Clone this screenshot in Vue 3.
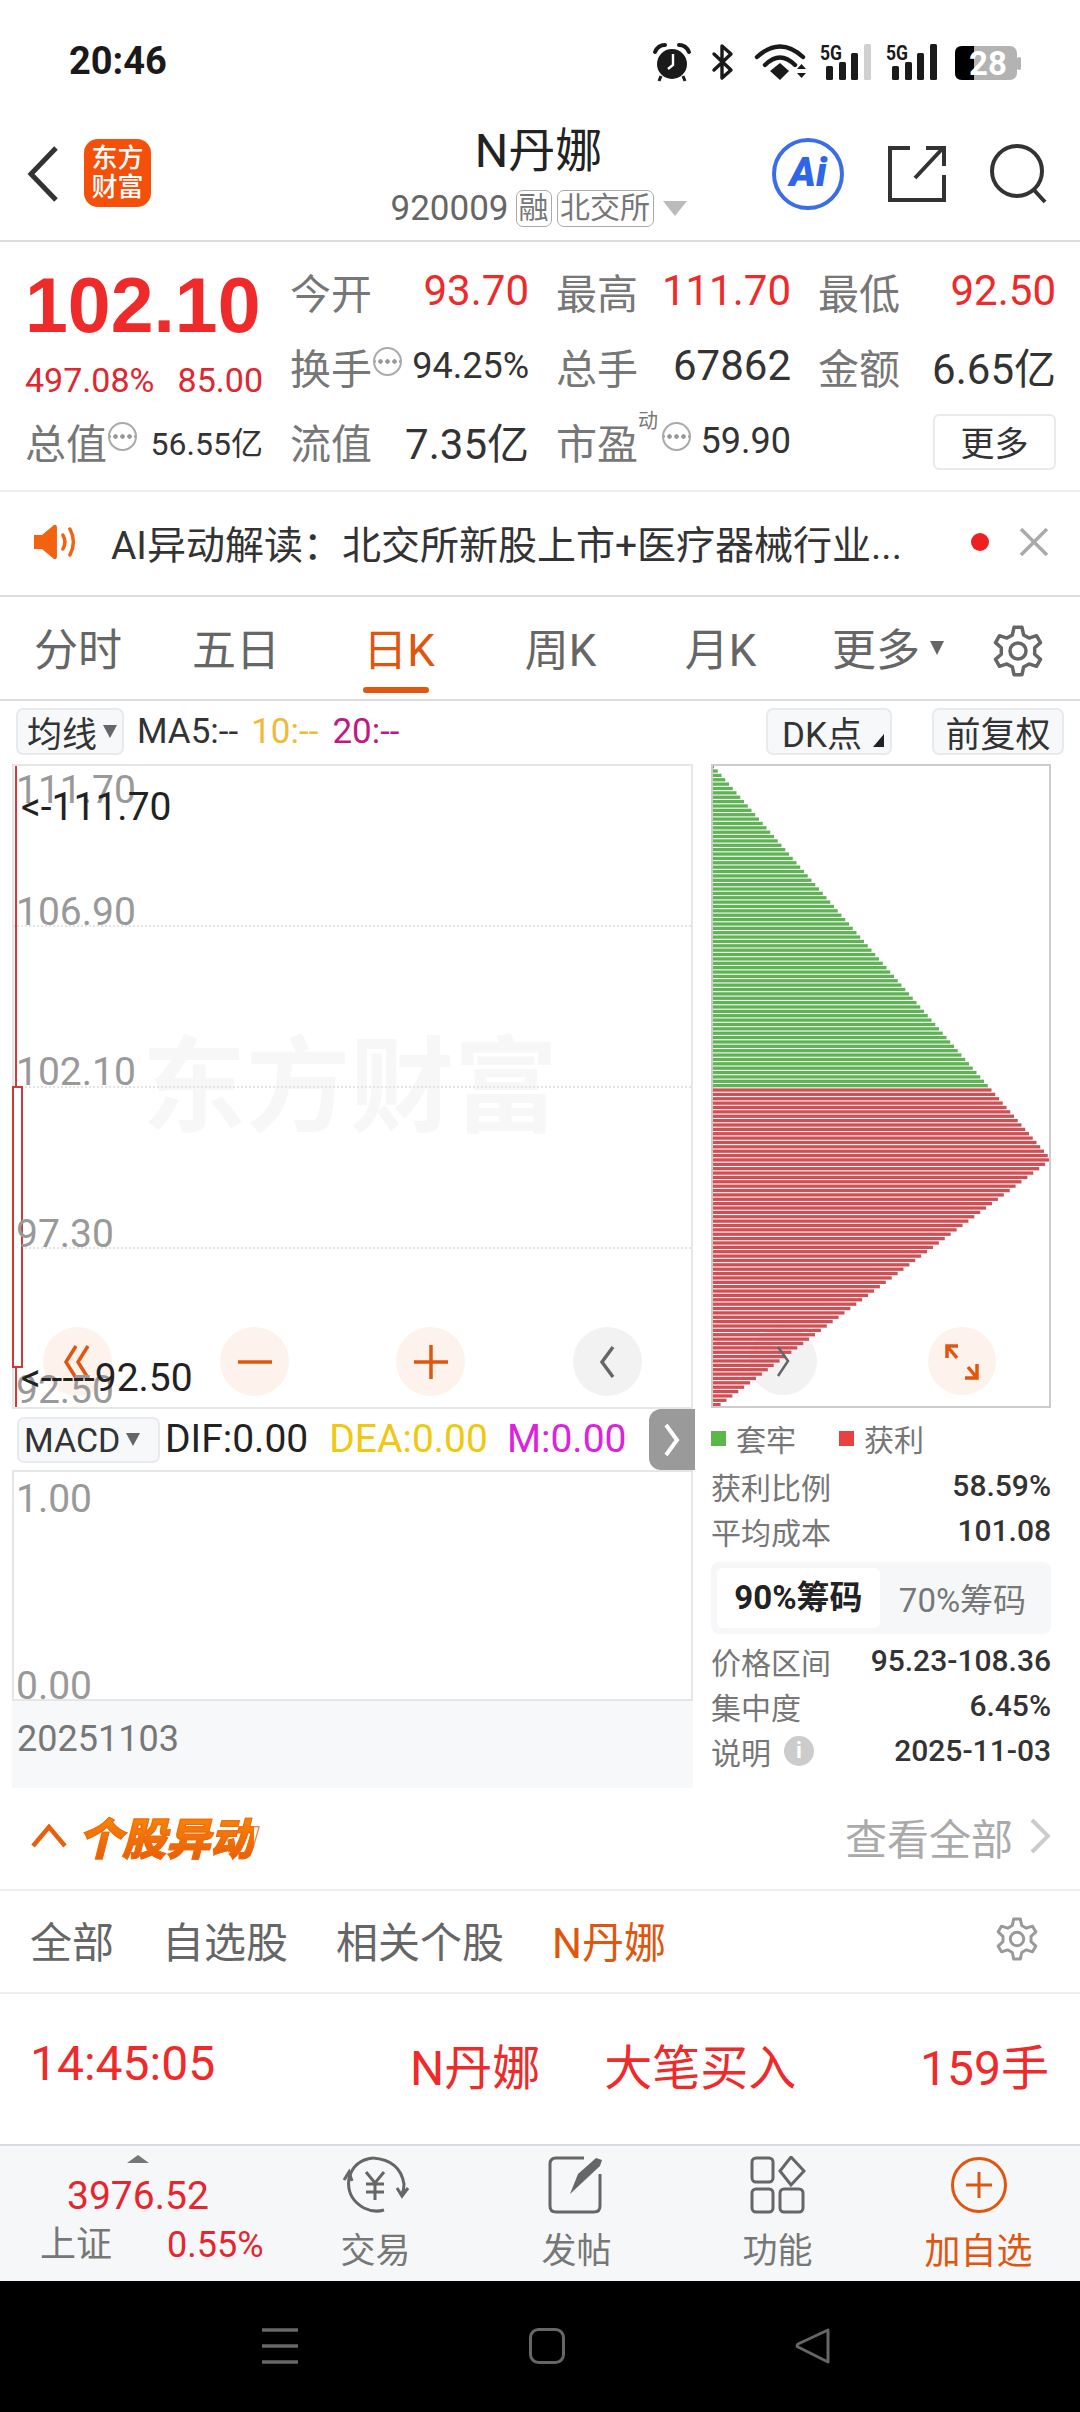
<template>
  <div class="page">
    <!-- status bar -->
    <div class="status">
      <span class="time">20:46</span>
      <div class="status-icons">
        <svg width="38" height="38" viewBox="0 0 38 38">
          <circle cx="19" cy="21" r="15" fill="#1a1a1a" />
          <path d="M2 9 Q5 2 12 2 M36 9 Q33 2 26 2" fill="none" stroke="#1a1a1a" stroke-width="4" stroke-linecap="round" />
          <path d="M8 33 L6 38 M30 33 L32 38" stroke="#1a1a1a" stroke-width="3" />
          <path d="M20 11 V22 L15 26" fill="none" stroke="#fff" stroke-width="2.4" />
        </svg>
        <svg class="bt" width="22" height="36" viewBox="0 0 22 36">
          <path d="M2 10 L19 26 L10 34 V2 L19 10 L2 26" fill="none" stroke="#1a1a1a" stroke-width="3.4" stroke-linejoin="round" stroke-linecap="round" />
        </svg>
        <svg class="wifi" width="50" height="36" viewBox="0 0 50 36">
          <path d="M1 13 Q24 -8 47 13" fill="none" stroke="#1a1a1a" stroke-width="4.4" stroke-linecap="round" />
          <path d="M9 21 Q24 6 39 21" fill="none" stroke="#1a1a1a" stroke-width="4.4" stroke-linecap="round" />
          <path d="M14 27 L24 19 L33 27 L24 36 Z" fill="#1a1a1a" />
          <path d="M41 25 L45.500 20 L50 25 Z M41 29 L50 29 L45.500 34 Z" fill="#1a1a1a" />
        </svg>
        <svg v-for="s in signals" :key="s.id" class="sig" width="52" height="36" viewBox="0 0 52 36">
          <text x="0" y="16" font-size="21" font-weight="700" textLength="22" lengthAdjust="spacingAndGlyphs" fill="#1a1a1a" font-family="Roboto, sans-serif">5G</text>
          <rect x="6" y="22" width="7" height="14" rx="1.500" fill="#1a1a1a" />
          <rect x="19" y="18" width="7" height="18" rx="1.500" fill="#1a1a1a" />
          <rect x="31" y="9" width="7" height="27" rx="1.500" fill="#1a1a1a" />
          <rect x="44" y="0" width="7" height="36" rx="1.500" :fill="s.last" />
        </svg>
        <svg class="batt" width="66" height="34" viewBox="0 0 66 34">
          <rect x="0" y="0" width="62" height="34" rx="7" fill="#b3b3b3" />
          <path d="M7 0 H19 V34 H7 Q0 34 0 27 V7 Q0 0 7 0 Z" fill="#000" />
          <rect x="62" y="11" width="4" height="13" rx="2" fill="#b3b3b3" />
          <text x="33" y="29" text-anchor="middle" font-size="33" font-weight="700" fill="#fff" font-family="Roboto, sans-serif">28</text>
        </svg>
      </div>
    </div>

    <!-- nav -->
    <div class="nav">
      <div class="nav-left">
        <svg width="32" height="56" viewBox="0 0 32 56">
          <path d="M29 2 L4 28 L29 54" fill="none" stroke="#333" stroke-width="5" />
        </svg>
        <div class="logo"><span>东方</span><span>财富</span></div>
      </div>
      <div class="nav-mid">
        <div class="title">N丹娜</div>
        <div class="sub">
          <span class="code">920009</span>
          <span class="tag t1">融</span>
          <span class="tag t2">北交所</span>
          <i class="sub-tri"></i>
        </div>
      </div>
      <div class="nav-right">
        <div class="ai-btn">Ai</div>
        <svg width="58" height="58" viewBox="0 0 58 58">
          <path d="M22 3 H2 V55 H56 V30" fill="none" stroke="#333" stroke-width="4" />
          <path d="M27 33 L55 3 M38 3 H56 V21" fill="none" stroke="#333" stroke-width="4" />
        </svg>
        <svg width="60" height="60" viewBox="0 0 60 60">
          <circle cx="27" cy="27" r="25" fill="none" stroke="#333" stroke-width="4" />
          <path d="M44 46 L55 58" stroke="#333" stroke-width="4" />
        </svg>
      </div>
    </div>

    <!-- quote -->
    <div class="quote">
      <div class="now">
        <div class="price">102.10</div>
        <div class="change"><span>497.08%</span><span>85.00</span></div>
      </div>
      <div class="cell"><span class="lab">今开</span><span class="val red">93.70</span></div>
      <div class="cell"><span class="lab">最高</span><span class="val red">111.70</span></div>
      <div class="cell"><span class="lab">最低</span><span class="val red">92.50</span></div>
      <div class="cell">
        <span class="lab">换手<i class="dots"></i></span><span class="val small">94.25%</span>
      </div>
      <div class="cell"><span class="lab">总手</span><span class="val">67862</span></div>
      <div class="cell"><span class="lab">金额</span><span class="val">6.65亿</span></div>
      <div class="cell">
        <span class="lab">总值<i class="dots"></i></span><span class="val tiny">56.55亿</span>
      </div>
      <div class="cell"><span class="lab">流值</span><span class="val">7.35亿</span></div>
      <div class="cell">
        <span class="lab">市盈<sup class="dong">动</sup><i class="dots"></i></span><span class="val small">59.90</span>
      </div>
      <div class="cell end"><button class="more">更多</button></div>
    </div>

    <!-- notice -->
    <div class="notice">
      <svg width="44" height="36" viewBox="0 0 44 36">
        <path d="M0 11 H8 L20 1 Q23 0 23 4 V32 Q23 36 20 35 L8 25 H0 Z" fill="#f4620f" />
        <path d="M29 11 Q33 18 29 25 M36 5 Q43 18 36 31" fill="none" stroke="#f4620f" stroke-width="3.500" stroke-linecap="round" />
      </svg>
      <span class="notice-text">AI异动解读：北交所新股上市+医疗器械行业...</span>
      <i class="notice-dot"></i>
      <svg width="30" height="28" viewBox="0 0 30 28">
        <path d="M2 1 L28 27 M28 1 L2 27" stroke="#aaa" stroke-width="3.500" />
      </svg>
    </div>

    <!-- period tabs -->
    <div class="periods">
      <div class="period-list">
        <span v-for="p in periods" :key="p" class="period" :class="{ on: p === '日K' }">{{ p }}</span>
        <span class="period">更多<i class="more-tri"></i></span>
      </div>
      <svg width="50" height="52" viewBox="0 0 50 52">
        <path :d="gearPath(25, 26, 24, 17, 6)" fill="none" stroke="#666" stroke-width="3.500" stroke-linejoin="round" />
        <circle cx="25" cy="26" r="8" fill="none" stroke="#666" stroke-width="3.500" />
      </svg>
    </div>

    <!-- toolbar -->
    <div class="toolbar">
      <div class="tool-btn ma">均线<i class="down-tri"></i></div>
      <span class="ma5">MA5:--</span>
      <span class="ma10">10:--</span>
      <span class="ma20">20:--</span>
      <div class="tool-btn dk">DK点<i class="corner"></i></div>
      <div class="tool-btn fq">前复权</div>
    </div>

    <!-- charts -->
    <div class="charts">
      <div class="left-col">
        <div class="kline">
          <div class="watermark">东方财富</div>
          <i v-for="g in gridTops" :key="g" class="grid" :style="{ top: g + 'px' }"></i>
          <i class="wick"></i>
          <i class="candle"></i>
          <div v-for="b in roundBtns" :key="b.id" class="round" :class="b.cls" :style="{ left: b.x + 'px' }">
            <svg width="36" height="36" viewBox="0 0 36 36">
              <path :d="b.d" fill="none" :stroke="b.color" stroke-width="3.500" />
            </svg>
          </div>
          <span v-for="a in axis" :key="a.t" class="axis" :style="{ top: a.y + 'px' }">{{ a.t }}</span>
          <span class="mark m1">&lt;-111.70</span>
          <span class="mark m2">&lt;-----92.50</span>
        </div>
        <div class="macd-bar">
          <div class="tool-btn macd">MACD<i class="down-tri"></i></div>
          <span class="dif">DIF:0.00</span>
          <span class="dea">DEA:0.00</span>
          <span class="m">M:0.00</span>
          <div class="macd-arrow">
            <svg width="20" height="36" viewBox="0 0 20 36">
              <path d="M4 3 L15 18 L4 33" fill="none" stroke="#fff" stroke-width="4" />
            </svg>
          </div>
        </div>
        <div class="macd-chart">
          <span>1.00</span>
          <span class="zero">0.00</span>
        </div>
        <div class="date">20251103</div>
      </div>

      <div class="right-col">
        <svg class="chips" width="340" height="644" viewBox="0 0 340 644">
          <circle cx="72" cy="597" r="34" fill="#f2f2f2" />
          <circle cx="251" cy="597" r="34" fill="#fdf2ec" />
          <rect v-for="b in chipBars" :key="b.y" x="0" :y="b.y" :width="b.w" height="3.3" :fill="b.c" />
          <path d="M67 583 L77 597 L67 612" fill="none" stroke="#666" stroke-width="2.500" />
          <path d="M236 594 V582 H247 M236 582 L246 594 M266 600 V614 H254 M266 614 L257 603" fill="none" stroke="#e0560f" stroke-width="3.500" />
          <rect x="1" y="1" width="338" height="642" fill="none" stroke="#ccc" stroke-width="2" />
        </svg>
        <div class="legend">
          <i class="sq green"></i><span>套牢</span>
          <i class="sq redsq"></i><span>获利</span>
        </div>
        <div class="stat"><span>获利比例</span><b>58.59%</b></div>
        <div class="stat"><span>平均成本</span><b>101.08</b></div>
        <div class="seg">
          <span class="seg-on">90%筹码</span>
          <span class="seg-off">70%筹码</span>
        </div>
        <div class="stat"><span>价格区间</span><b>95.23-108.36</b></div>
        <div class="stat"><span>集中度</span><b>6.45%</b></div>
        <div class="stat"><span>说明<i class="info">i</i></span><b>2025-11-03</b></div>
      </div>
    </div>

    <!-- stock moves -->
    <div class="moves-head">
      <svg width="36" height="24" viewBox="0 0 36 24">
        <path d="M2 22 L18 3 L34 22" fill="none" stroke="#e8600e" stroke-width="4.500" />
      </svg>
      <span class="moves-title">个股异动</span>
      <span class="see-all">查看全部</span>
      <svg width="20" height="36" viewBox="0 0 20 36">
        <path d="M2 2 L18 18 L2 34" fill="none" stroke="#ccc" stroke-width="4" />
      </svg>
    </div>
    <div class="filters">
      <span>全部</span>
      <span>自选股</span>
      <span>相关个股</span>
      <span class="on">N丹娜</span>
      <svg class="filter-gear" width="42" height="44" viewBox="0 0 50 52">
        <path :d="gearPath(25, 26, 24, 17, 6)" fill="none" stroke="#999" stroke-width="3.500" stroke-linejoin="round" />
        <circle cx="25" cy="26" r="8" fill="none" stroke="#999" stroke-width="3.500" />
      </svg>
    </div>
    <div class="move-row">
      <span class="mv-time">14:45:05</span>
      <span class="mv-name">N丹娜</span>
      <span class="mv-type">大笔买入</span>
      <span class="mv-vol">159手</span>
    </div>

    <!-- bottom bar -->
    <div class="bottom">
      <div class="index">
        <i class="idx-tri"></i>
        <div class="idx-price">3976.52</div>
        <div class="idx-row"><span class="idx-name">上证</span><span class="idx-pct">0.55%</span></div>
      </div>
      <div class="bot-item">
        <svg width="68" height="58" viewBox="0 0 68 58">
          <path d="M31 2 Q12 4 7 22 Q4 42 22 52 Q32 57 42 54" fill="none" stroke="#666" stroke-width="3" />
          <path d="M31 2 Q58 4 62 28 Q62 34 60 38" fill="none" stroke="#666" stroke-width="3" />
          <path d="M2 24 L7 16 L10 25 M55 32 L60 40 L66 32" fill="none" stroke="#666" stroke-width="3" />
          <path d="M24 16 L33 27 L42 16 M33 27 V44 M24 28 H42 M24 36 H42" fill="none" stroke="#666" stroke-width="3" />
        </svg>
        <span>交易</span>
      </div>
      <div class="bot-item">
        <svg width="58" height="58" viewBox="0 0 58 58">
          <path d="M36 2 H8 Q2 2 2 8 V50 Q2 56 8 56 H46 Q52 56 52 50 V18" fill="none" stroke="#666" stroke-width="3" />
          <path d="M22 38 L30 18 L48 2 L54 4 L52 10 Z" fill="#666" />
        </svg>
        <span>发帖</span>
      </div>
      <div class="bot-item">
        <svg width="56" height="58" viewBox="0 0 56 58">
          <rect x="2" y="2" width="21" height="24" rx="4" fill="none" stroke="#666" stroke-width="3" />
          <path d="M41 1 L54 15 L41 29 L30 15 Z" fill="none" stroke="#666" stroke-width="3" />
          <rect x="2" y="33" width="21" height="23" rx="4" fill="none" stroke="#666" stroke-width="3" />
          <rect x="30" y="33" width="23" height="23" rx="4" fill="none" stroke="#666" stroke-width="3" />
        </svg>
        <span>功能</span>
      </div>
      <div class="bot-item add">
        <svg width="58" height="58" viewBox="0 0 58 58">
          <circle cx="29" cy="29" r="26.500" fill="none" stroke="#e0560f" stroke-width="3" />
          <path d="M29 16 V42 M16 29 H42" stroke="#e0560f" stroke-width="3" />
        </svg>
        <span>加自选</span>
      </div>
    </div>

    <!-- system nav -->
    <div class="sysnav">
      <svg width="36" height="36" viewBox="0 0 36 36">
        <path d="M0 2 H36 M0 18 H36 M0 34 H36" stroke="#666" stroke-width="3.500" />
      </svg>
      <svg width="36" height="36" viewBox="0 0 36 36">
        <rect x="1.500" y="1.500" width="33" height="33" rx="8" fill="none" stroke="#666" stroke-width="3" />
      </svg>
      <svg width="36" height="36" viewBox="0 0 36 36">
        <path d="M33 2 V34 L3 19 Q1 18 3 16 Z" fill="none" stroke="#666" stroke-width="3" stroke-linejoin="round" />
      </svg>
    </div>
  </div>
</template>

<script setup>
const signals = [
  { id: 1, last: '#d0d0d0' },
  { id: 2, last: '#1a1a1a' }
]

const periods = ['分时', '五日', '日K', '周K', '月K']

const gridTops = [159, 320, 481]

const axis = [
  { t: '111.70', y: 5 },
  { t: '106.90', y: 127 },
  { t: '102.10', y: 287 },
  { t: '97.30', y: 449 },
  { t: '92.50', y: 605 }
]

const roundBtns = [
  { id: 1, x: 29, cls: 'warm', color: '#e0560f', d: 'M16 2 L6 18 L16 34 M28 2 L18 18 L28 34' },
  { id: 2, x: 206, cls: 'warm', color: '#e0560f', d: 'M1 18 H35' },
  { id: 3, x: 382, cls: 'warm', color: '#e0560f', d: 'M1 18 H35 M18 1 V35' },
  { id: 4, x: 559, cls: 'grey', color: '#666', d: 'M23 3 L12 18 L23 33' }
]

// chip distribution: 90 bars grow to the peak, then 57 shrink
const chipBars = []
for (let i = 0; i < 147; i++) {
  const w = i <= 90 ? 3 + i * 3.75 : 340 - (i - 90) * 5.9
  chipBars.push({
    y: +(1 + i * 4.37).toFixed(2),
    w: Math.max(w, 3),
    c: i < 74 ? '#5fb355' : '#cf4f54'
  })
}

function gearPath(cx, cy, r1, r2, teeth) {
  const pts = []
  const step = (Math.PI * 2) / teeth
  for (let i = 0; i < teeth; i++) {
    const a = i * step - Math.PI / 2
    const list = [
      [a - step * 0.16, r1],
      [a + step * 0.16, r1],
      [a + step * 0.32, r2],
      [a + step * 0.68, r2]
    ]
    for (const [ang, r] of list) {
      pts.push((cx + Math.cos(ang) * r).toFixed(1) + ' ' + (cy + Math.sin(ang) * r).toFixed(1))
    }
  }
  return 'M' + pts.join(' L') + ' Z'
}
</script>

<style>
html,
body {
  margin: 0;
  background: #fff;
}
</style>

<style scoped>
.page {
  width: 1080px;
  height: 2412px;
  overflow: hidden;
  background: #fff;
  font-family: Roboto, "Noto Sans CJK SC", sans-serif;
  color: #333;
}
.page * {
  box-sizing: border-box;
}
i {
  display: block;
}

.status {
  height: 122px;
  padding: 0 59px 0 69px;
  display: flex;
  justify-content: space-between;
  align-items: flex-start;
}
.time {
  margin-top: 39px;
  font-size: 38px;
  line-height: 44px;
  font-weight: 700;
  color: #1a1a1a;
}
.status-icons {
  display: flex;
  align-items: flex-start;
  margin-top: 43px;
}
.status-icons svg {
  overflow: visible;
}
.bt {
  margin: 1px 0 0 21px;
}
.wifi {
  margin: 1px 0 0 22px;
}
.sig {
  margin: 1px 0 0 14px;
}
.batt {
  margin: 3px 0 0 17px;
}

.nav {
  height: 120px;
  padding: 0 30px 0 27px;
  display: grid;
  grid-template-columns: 1fr auto 1fr;
  border-bottom: 2px solid #dcdcdc;
}
.nav-left {
  display: flex;
  align-items: center;
  gap: 25px;
  height: 104px;
}
.logo {
  width: 67px;
  height: 68px;
  margin-top: -2px;
  border-radius: 14px;
  background: #f4500a;
  color: #fff;
  font-size: 26px;
  line-height: 29px;
  font-weight: 500;
  display: flex;
  flex-direction: column;
  align-items: center;
  justify-content: center;
}
.nav-mid {
  text-align: center;
}
.title {
  font-size: 47px;
  line-height: 58px;
  color: #222;
}
.sub {
  margin-top: 9px;
  display: flex;
  align-items: center;
  height: 38px;
}
.code {
  font-size: 35px;
  color: #666;
  margin-right: 7px;
}
.tag {
  height: 37px;
  border: 1.500px solid #aaa;
  border-radius: 7px;
  font-size: 30px;
  line-height: 34px;
  color: #777;
  text-align: center;
  white-space: nowrap;
}
.t1 {
  width: 36px;
  margin-right: 5px;
}
.t2 {
  width: 97px;
}
.sub-tri {
  width: 0;
  height: 0;
  margin-left: 9px;
  border-left: 12px solid transparent;
  border-right: 12px solid transparent;
  border-top: 15px solid #bbb;
}
.nav-right {
  display: flex;
  align-items: center;
  justify-content: flex-end;
  gap: 44px;
  height: 104px;
}
.ai-btn {
  width: 72px;
  height: 72px;
  border: 4px solid #3a6ee8;
  border-radius: 50%;
  color: #2f66e6;
  font-size: 40px;
  line-height: 62px;
  font-weight: 900;
  font-style: italic;
  text-align: center;
}

.quote {
  height: 250px;
  padding: 11px 0 0 25px;
  display: grid;
  grid-template-columns: 238px 239px 235px 238px;
  column-gap: 27px;
  grid-auto-rows: 75px;
  border-bottom: 2px solid #eee;
}
.now {
  grid-row: span 2;
  padding-top: 12px;
}
.price {
  font-family: "Liberation Sans", sans-serif;
  font-size: 77px;
  line-height: 80px;
  font-weight: 700;
  color: #ee2a2a;
}
.change {
  margin-top: 15px;
  display: flex;
  justify-content: space-between;
  font-size: 34px;
  line-height: 40px;
  color: #e0262e;
}
.cell {
  display: flex;
  justify-content: space-between;
  align-items: center;
}
.cell.end {
  justify-content: flex-end;
}
.lab {
  position: relative;
  display: flex;
  align-items: center;
  font-size: 41px;
  color: #777;
}
.val {
  font-size: 42px;
  color: #333;
}
.val.red {
  color: #ee2a2a;
}
.val.small {
  font-size: 36px;
}
.val.tiny {
  font-size: 32px;
}
.dots {
  width: 29px;
  height: 29px;
  margin: -8px 0 0 1px;
  border: 2px solid #aaa;
  border-radius: 50%;
  background: radial-gradient(circle at 50% 50%, #999 2px, transparent 2.500px) 0 0 / 7px 100% repeat-x;
  background-position: center;
}
.dong {
  position: absolute;
  left: 82px;
  top: -2px;
  font-size: 20px;
  line-height: 24px;
  color: #777;
}
.lab:has(.dong) .dots {
  margin-left: 24px;
}
.more {
  width: 123px;
  height: 56px;
  margin-top: 2px;
  padding: 0;
  border: 2px solid #eaeaea;
  border-radius: 6px;
  background: #fff;
  font-family: inherit;
  font-size: 34px;
  color: #333;
}

.notice {
  height: 105px;
  padding: 0 31px 3px 34px;
  display: flex;
  align-items: center;
  border-bottom: 2px solid #ddd;
}
.notice-text {
  margin-left: 33px;
  width: 862px;
  font-size: 39px;
  color: #333;
  white-space: nowrap;
}
.notice-dot {
  width: 18px;
  height: 18px;
  margin-right: 30px;
  border-radius: 50%;
  background: #ee2020;
}

.periods {
  height: 104px;
  padding: 5px 37px 0 0;
  display: flex;
  justify-content: space-between;
  align-items: center;
  border-bottom: 2px solid #ddd;
  position: relative;
}
.period-list {
  display: grid;
  grid-template-columns: 156px 160px 166px 157px 163px 172px;
  justify-items: center;
  font-size: 44px;
  line-height: 60px;
  color: #666;
}
.period {
  display: flex;
  align-items: center;
  position: relative;
}
.period.on {
  color: #e0560f;
}
.period.on::after {
  content: "";
  position: absolute;
  left: 0;
  right: 6px;
  top: 66px;
  height: 6px;
  border-radius: 3px;
  background: #e0560f;
}
.more-tri {
  margin: -6px 0 0 10px;
  width: 0;
  height: 0;
  border-left: 7px solid transparent;
  border-right: 7px solid transparent;
  border-top: 14px solid #666;
}

.toolbar {
  height: 63px;
  padding: 7px 16px 0;
  display: flex;
  align-items: flex-start;
  font-size: 35px;
}
.tool-btn {
  height: 47px;
  border: 2px solid #e8eaee;
  border-radius: 7px;
  background: #f7f8fa;
  color: #333;
  display: flex;
  align-items: center;
  position: relative;
}
.ma {
  width: 108px;
  padding-left: 9px;
}
.down-tri {
  margin: 0 0 0 6px;
  width: 0;
  height: 0;
  border-left: 7px solid transparent;
  border-right: 7px solid transparent;
  border-top: 13px solid #666;
}
.ma5,
.ma10,
.ma20 {
  line-height: 47px;
}
.ma5 {
  margin-left: 13px;
  color: #333;
}
.ma10 {
  margin-left: 13px;
  color: #f0b93c;
}
.ma20 {
  margin-left: 14px;
  color: #c2187f;
}
.dk {
  width: 126px;
  margin-left: auto;
  padding-left: 14px;
}
.corner {
  position: absolute;
  right: 6px;
  bottom: 6px;
  width: 0;
  height: 0;
  border-left: 11px solid transparent;
  border-bottom: 13px solid #222;
}
.fq {
  width: 132px;
  margin-left: 40px;
  justify-content: center;
}

.charts {
  padding-left: 12px;
  display: flex;
  height: 1024px;
}
.left-col {
  width: 681px;
}
.kline {
  position: relative;
  height: 645px;
  border: 2px solid #e6e6e6;
}
.watermark {
  position: absolute;
  left: 128px;
  top: 258px;
  font-size: 104px;
  line-height: 130px;
  font-weight: 700;
  color: #f7f7f7;
  white-space: nowrap;
}
.grid {
  position: absolute;
  left: 0;
  right: 0;
  height: 0;
  border-top: 2px dotted #e4e4e4;
}
.wick {
  position: absolute;
  left: 1px;
  top: 0;
  bottom: 0;
  width: 2px;
  background: #d33a3a;
}
.candle {
  position: absolute;
  left: -2px;
  top: 320px;
  width: 11px;
  height: 282px;
  border: 2px solid #cc3a3a;
  background: #fff;
}
.axis {
  position: absolute;
  left: 2px;
  font-size: 39px;
  line-height: 38px;
  color: #999;
}
.mark {
  position: absolute;
  left: 7px;
  font-size: 39px;
  line-height: 38px;
  color: #222;
  white-space: nowrap;
}
.m1 {
  top: 22px;
}
.m2 {
  top: 593px;
}
.round {
  position: absolute;
  top: 561px;
  width: 69px;
  height: 69px;
  border-radius: 50%;
  display: flex;
  align-items: center;
  justify-content: center;
}
.round.warm {
  background: #fdf2ec;
}
.round.grey {
  background: #f2f2f2;
}

.macd-bar {
  height: 61px;
  display: flex;
  align-items: center;
  position: relative;
  padding-bottom: 1px;
  font-size: 39px;
  white-space: nowrap;
}
.macd {
  width: 143px;
  height: 46px;
  margin: 1px 0 0 5px;
  padding-left: 5px;
  font-size: 34px;
}
.dif {
  margin-left: 5px;
  color: #222;
}
.dea {
  margin-left: 21px;
  color: #f0c810;
}
.m {
  margin-left: 19px;
  color: #dd22dd;
}
.macd-arrow {
  position: absolute;
  right: -2px;
  top: 0;
  width: 46px;
  height: 61px;
  border-radius: 12px 0 0 12px;
  background: #9a9a9a;
  display: flex;
  align-items: center;
  justify-content: center;
}
.macd-chart {
  height: 231px;
  padding: 5px 0 0 2px;
  border: 2px solid #e6e6e6;
  font-size: 39px;
  line-height: 44px;
  color: #999;
  display: flex;
  flex-direction: column;
  justify-content: space-between;
}
.zero {
  margin-bottom: -9px;
}
.date {
  height: 87px;
  padding: 17px 0 0 5px;
  background: #f7f8fa;
  font-size: 36px;
  line-height: 42px;
  color: #777;
}

.right-col {
  width: 340px;
  margin-left: 18px;
}
.chips {
  display: block;
}
.legend {
  height: 55px;
  padding-top: 5px;
  display: flex;
  align-items: center;
  font-size: 30px;
  color: #777;
}
.sq {
  width: 15px;
  height: 15px;
}
.green {
  background: #59b847;
}
.redsq {
  margin-left: 43px;
  background: #e94040;
}
.legend span {
  margin-left: 10px;
}
.stat {
  height: 45px;
  display: flex;
  justify-content: space-between;
  align-items: center;
  font-size: 30px;
  color: #777;
}
.stat span {
  display: flex;
  align-items: center;
}
.stat b {
  font-size: 30px;
  font-weight: 500;
  color: #333;
}
.info {
  width: 30px;
  height: 30px;
  margin-left: 13px;
  border-radius: 50%;
  background: #ccc;
  color: #fff;
  font-size: 22px;
  line-height: 30px;
  font-weight: 700;
  font-style: normal;
  text-align: center;
}
.seg {
  height: 72px;
  margin: 9px 0 4px;
  padding: 6px;
  border-radius: 8px;
  background: #f6f7f9;
  display: flex;
  align-items: center;
  font-size: 33px;
}
.seg-on {
  width: 163px;
  height: 60px;
  border-radius: 6px;
  background: #fff;
  color: #222;
  font-weight: 700;
  line-height: 60px;
  text-align: center;
}
.seg-off {
  flex: 1;
  color: #777;
  text-align: center;
}

.moves-head {
  height: 103px;
  padding: 0 30px 5px 31px;
  display: flex;
  align-items: center;
  border-bottom: 2px solid #eee;
}
.moves-title {
  margin-left: 11px;
  font-size: 44px;
  font-weight: 900;
  font-style: italic;
  -webkit-text-stroke: 1px #ee6a10;
  background: linear-gradient(180deg, #ff9000, #e4560c);
  -webkit-background-clip: text;
  background-clip: text;
  color: transparent;
}
.see-all {
  margin-left: auto;
  margin-right: 17px;
  font-size: 42px;
  color: #aaa;
}
.filters {
  height: 103px;
  padding: 0 42px 5px 30px;
  display: flex;
  align-items: center;
  gap: 48px;
  font-size: 42px;
  color: #666;
  border-bottom: 2px solid #eee;
}
.filters .on {
  color: #e0560f;
}
.filter-gear {
  margin-left: auto;
}
.move-row {
  height: 152px;
  position: relative;
  display: flex;
  align-items: center;
  padding: 0 31px 11px 30px;
  font-size: 48px;
  color: #ee2a2a;
  border-bottom: 2px solid #d8dbe2;
}
.mv-time {
  width: 380px;
}
.mv-type {
  margin-left: 64px;
}
.mv-vol {
  margin-left: auto;
}

.bottom {
  height: 135px;
  background: #f6f7f9;
  display: grid;
  grid-template-columns: 275px repeat(4, 201px);
}
.index {
  padding: 9px 0 0 40px;
  position: relative;
}
.idx-tri {
  position: absolute;
  left: 127px;
  top: 9px;
  width: 0;
  height: 0;
  border-left: 11px solid transparent;
  border-right: 11px solid transparent;
  border-bottom: 8px solid #777;
}
.idx-price {
  margin: 18px 0 0 27px;
  font-size: 39px;
  line-height: 46px;
  color: #e6262e;
}
.idx-row {
  margin-top: 3px;
  display: flex;
  align-items: center;
  line-height: 46px;
}
.idx-name {
  font-size: 36px;
  color: #777;
}
.idx-pct {
  margin-left: 55px;
  font-size: 36px;
  color: #e6262e;
}
.bot-item {
  padding-top: 10px;
  display: flex;
  flex-direction: column;
  align-items: center;
  font-size: 35px;
  line-height: 40px;
  color: #777;
}
.bot-item span {
  margin-top: 18px;
}
.add {
  color: #e0560f;
  font-size: 36px;
}
.sysnav {
  height: 132px;
  background: #000;
  padding: 47px 249px 0 262px;
  display: flex;
  justify-content: space-between;
  align-items: flex-start;
}
</style>
